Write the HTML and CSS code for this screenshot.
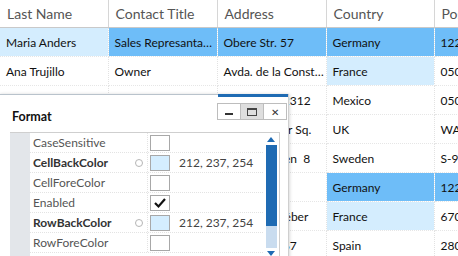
FILE: index.html
```html
<!DOCTYPE html>
<html lang="en">
<head>
    <meta charset="UTF-8">
    <title>Grid Format</title>
    <link rel="stylesheet" href="styles.css">
</head>
<body>
    <table class="grid">
        <colgroup>
            <col class="c1"><col class="c2"><col class="c3"><col class="c4"><col class="c5">
        </colgroup>
        <thead>
            <tr><th>Last Name</th><th>Contact Title</th><th>Address</th><th>Country</th><th>Pos</th></tr>
        </thead>
        <tbody>
            <tr><td class="row-hl">Maria Anders</td><td class="sel">Sales Represanta…</td><td class="sel">Obere Str. 57</td><td class="sel">Germany</td><td class="sel">1220</td></tr>
            <tr><td>Ana Trujillo</td><td>Owner</td><td>Avda. de la Const…</td><td class="row-hl">France</td><td>050</td></tr>
            <tr><td></td><td></td><td>Mataderos 2312</td><td>Mexico</td><td>050</td></tr>
            <tr><td></td><td></td><td>120 Hanover Sq.</td><td>UK</td><td>WA</td></tr>
            <tr><td></td><td></td><td>Berguvsvägen  8</td><td>Sweden</td><td>S-95</td></tr>
            <tr><td></td><td></td><td></td><td class="sel">Germany</td><td class="sel">1220</td></tr>
            <tr><td></td><td></td><td>24, place Kléber</td><td class="row-hl">France</td><td>670</td></tr>
            <tr><td></td><td></td><td>C/ Araquil, 67</td><td>Spain</td><td>280</td></tr>
        </tbody>
    </table>

    <!-- floating format window -->
    <div class="window">
        <div class="titlebar">
            <span class="title">Format</span>
            <div class="buttons">
                <span class="btn"><span class="min-icon"></span></span>
                <span class="btn btn-active"><span class="max-icon"></span></span>
                <span class="btn close">&#x2715;</span>
            </div>
        </div>
        <div class="props">
            <div class="gutter"></div>
            <div class="prop-list">
                <div class="prop">
                    <div class="name">CaseSensitive</div>
                    <div class="value"><span class="box"></span></div>
                </div>
                <div class="prop">
                    <div class="name bold">CellBackColor <span class="dot"></span></div>
                    <div class="value"><span class="box swatch"></span><span class="num">212, 237, 254</span></div>
                </div>
                <div class="prop">
                    <div class="name">CellForeColor</div>
                    <div class="value"><span class="box"></span></div>
                </div>
                <div class="prop">
                    <div class="name">Enabled</div>
                    <div class="value">
                        <span class="box check">
                            <svg width="14" height="12" viewBox="0 0 14 12"><polyline points="2,6 5.5,9.5 12,2" fill="none" stroke="#111" stroke-width="2.2"/></svg>
                        </span>
                    </div>
                </div>
                <div class="prop">
                    <div class="name bold">RowBackColor <span class="dot"></span></div>
                    <div class="value"><span class="box swatch"></span><span class="num">212, 237, 254</span></div>
                </div>
                <div class="prop">
                    <div class="name">RowForeColor</div>
                    <div class="value"><span class="box"></span></div>
                </div>
            </div>
            <div class="scrollbar">
                <span class="arrow up"></span>
                <span class="thumb"></span>
                <span class="track"></span>
                <span class="arrow down"></span>
            </div>
        </div>
    </div>
</body>
</html>
```

FILE: styles.css
```css
body {
    margin: 0;
    background: #fff;
    font-family: Lato, "Noto Sans", Arial, sans-serif;
    color: #111;
    overflow: hidden;
    position: relative;
    height: 256px;
}

.grid {
    border-collapse: collapse;
    table-layout: fixed;
    width: 480px;
}

.c1 { width: 108px; }
.c2 { width: 109px; }
.c3 { width: 109px; }
.c4 { width: 108px; }
.c5 { width: 46px; }

.grid th {
    height: 27px;
    padding: 0 0 0 7px;
    text-align: left;
    font-weight: normal;
    font-size: 14px;
    color: #555;
    border-right: 1px solid #d6d6d6;
    border-bottom: 1px solid #c9c9c9;
    white-space: nowrap;
    overflow: hidden;
}

.grid td {
    height: 28px;
    padding: 0 0 0 6px;
    font-size: 12px;
    white-space: pre;
    overflow: hidden;
    border-right: 1px dotted #e2e2e2;
    border-bottom: 1px dotted #e6e6e6;
}

.grid td.row-hl {
    background: #d4edfe;
}

.grid td.sel {
    background: #6ebdf8;
}

.window {
    position: absolute;
    left: -1px;
    top: 94px;
    width: 289px;
    height: 170px;
    background: #fff;
    border-top: 1px solid #b9c3cc;
    border-right: 1px solid #cfcfcf;
    box-shadow: 1px 0 3px rgba(0, 0, 0, 0.15);
}

.titlebar {
    display: flex;
    justify-content: space-between;
    align-items: flex-start;
    height: 37px;
}

.title {
    font-weight: bold;
    font-size: 12.5px;
    margin: 14px 0 0 13px;
}

.buttons {
    display: flex;
    border-top: 3px solid #1f6bb3;
    margin-top: -1px;
    padding: 6px 1px 0 0;
}

.btn {
    width: 22px;
    height: 15px;
    border: 1px solid #bdbdbd;
    margin-left: -1px;
    display: flex;
    align-items: center;
    justify-content: center;
    font-size: 10px;
    color: #333;
}

.btn-active {
    background: #dedede;
}

.min-icon {
    width: 8px;
    height: 2px;
    background: #333;
    margin-top: 5px;
}

.max-icon {
    width: 8px;
    height: 5px;
    border: 1px solid #444;
    border-top-width: 2px;
}

.props {
    display: flex;
    margin-left: 11px;
    width: 269px;
    border-top: 1px solid #cfcfcf;
    border-right: 1px solid #cfcfcf;
}

.gutter {
    width: 20px;
    background: #e3e6ea;
}

.prop-list {
    flex: 1;
}

.prop {
    display: flex;
    height: 19px;
    border-bottom: 1px dotted #e3e3e3;
}

.name {
    width: 114px;
    padding-left: 3px;
    font-size: 12px;
    color: #555;
    line-height: 19px;
    border-right: 1px dotted #e3e3e3;
    display: flex;
    justify-content: space-between;
    align-items: center;
}

.name.bold {
    font-weight: bold;
    color: #333;
}

.dot {
    width: 6px;
    height: 6px;
    border: 1px solid #b5b5b5;
    border-radius: 50%;
    margin-right: 4px;
}

.value {
    display: flex;
    align-items: center;
    padding-left: 2px;
}

.box {
    width: 18px;
    height: 14px;
    border: 1px solid #a8a8a8;
    background: #fff;
    display: flex;
    align-items: center;
    justify-content: center;
}

.box.swatch {
    background: #d4edfe;
}

.num {
    margin-left: 9px;
    font-size: 12px;
    color: #444;
}

.scrollbar {
    width: 16px;
    display: flex;
    flex-direction: column;
    align-items: center;
    padding: 4px 0 0 0;
}

.arrow {
    width: 0;
    height: 0;
    border-left: 4px solid transparent;
    border-right: 4px solid transparent;
}

.arrow.up {
    border-bottom: 5px solid #1f6bb3;
}

.arrow.down {
    border-top: 5px solid #1f6bb3;
    margin-top: 3px;
}

.thumb {
    width: 11px;
    height: 81px;
    background: #1f6bb3;
    margin-top: 3px;
}

.track {
    width: 11px;
    height: 22px;
    background: #c9dcef;
}
```
